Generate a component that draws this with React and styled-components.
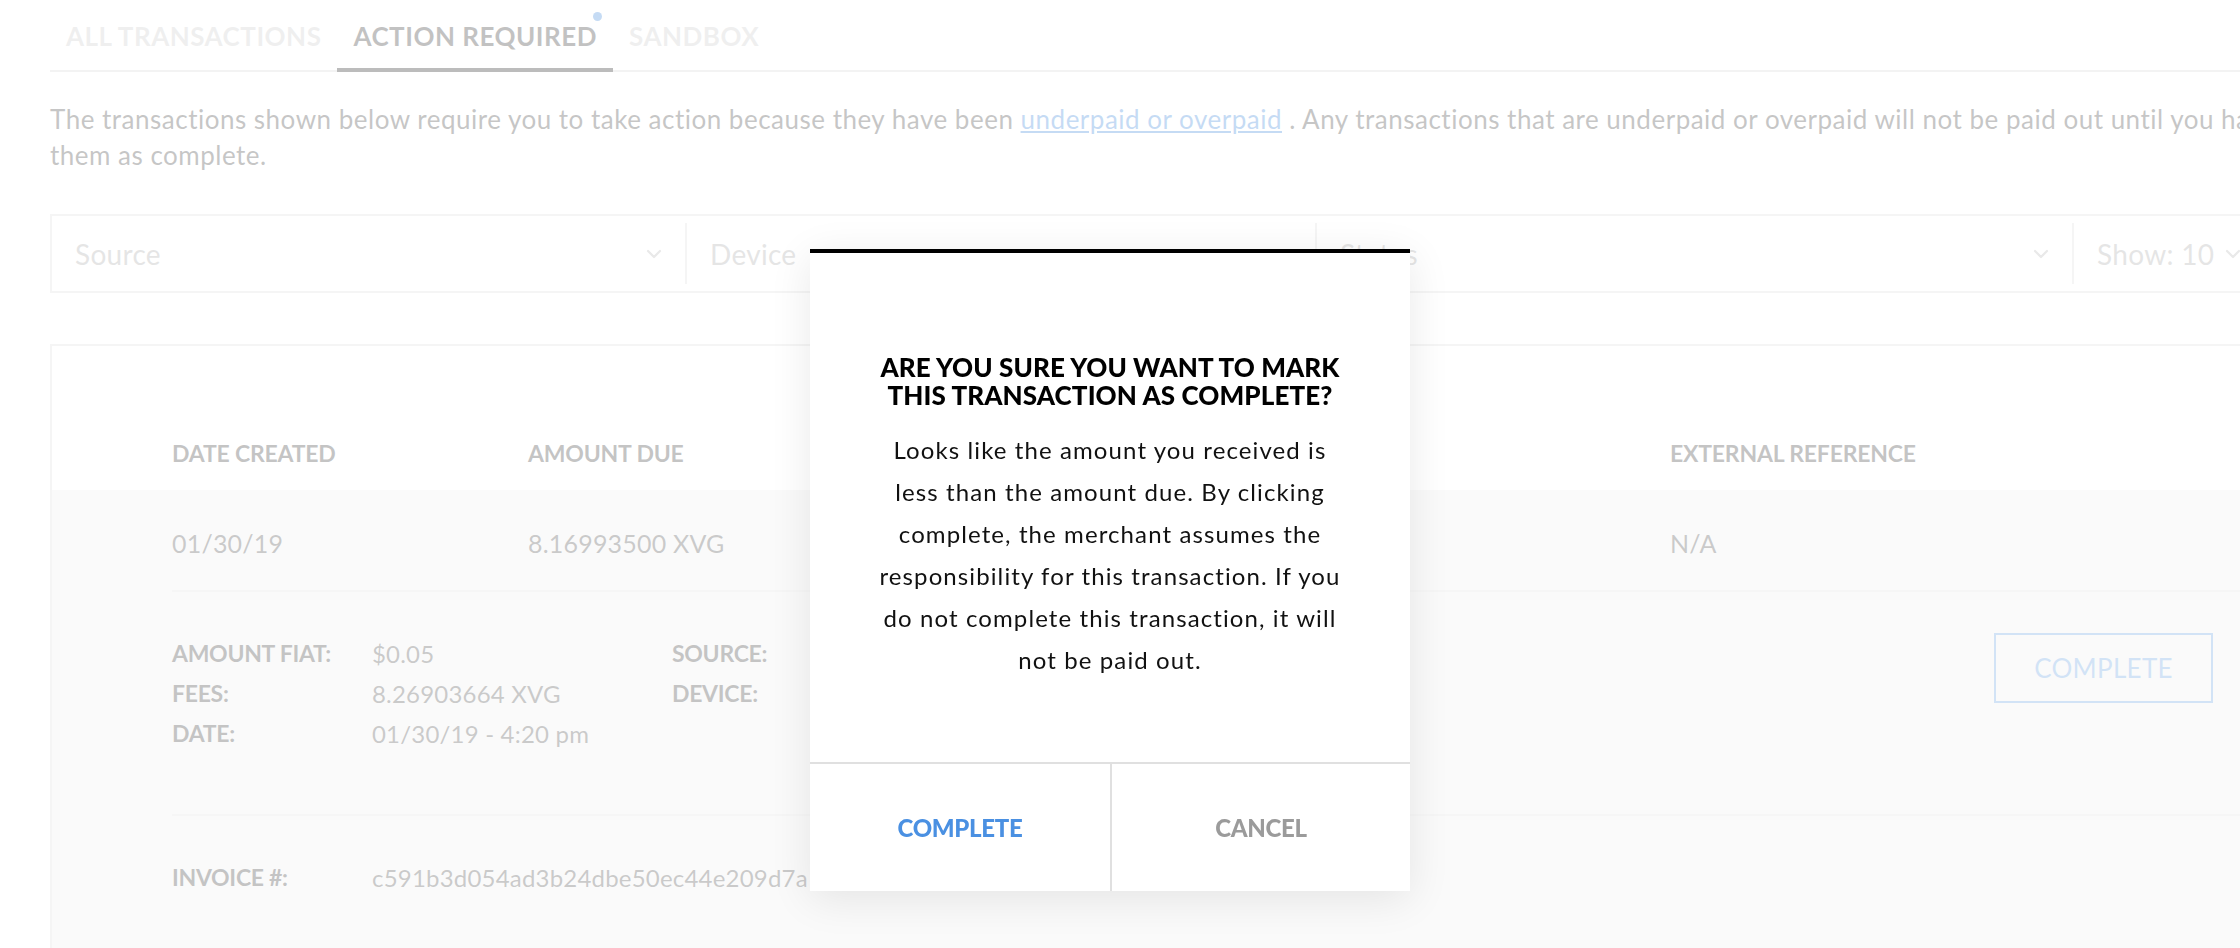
import React from "react";
import styled, { createGlobalStyle } from "styled-components";
import { ChevronDown } from "lucide-react";

const GlobalStyle = createGlobalStyle`
  html, body {
    margin: 0;
    padding: 0;
    background: #ffffff;
    overflow: hidden;
  }
  body {
    font-family: Lato, "Open Sans", "Liberation Sans", sans-serif;
    color: #414141;
  }
  * { box-sizing: border-box; }
`;

const Page = styled.div`
  width: 2400px;
  height: 948px;
  padding-left: 50px;
  position: relative;
`;

const TabBar = styled.div`
  display: flex;
  width: 2216px;
  height: 72px;
  box-shadow: inset 0 -2px 0 #d8d8d8;
`;

const Tab = styled.div`
  position: relative;
  height: 72px;
  padding: 21px 16px 0;
  font-size: 26px;
  line-height: 30px;
  font-weight: 700;
  letter-spacing: 0.5px;
  color: ${(p) => (p.active ? "#343434" : "#cacaca")};
  border-bottom: 4px solid ${(p) => (p.active ? "#202020" : "transparent")};
`;

const Dot = styled.span`
  position: absolute;
  top: 12px;
  right: 11px;
  width: 9px;
  height: 9px;
  border-radius: 50%;
  background: #3e87da;
`;

const Intro = styled.p`
  width: 2325px;
  margin: 29px 0 0;
  font-size: 26px;
  line-height: 36px;
  letter-spacing: 0.5px;
  color: #414141;
`;

const Link = styled.a`
  color: #3e87da;
  text-decoration: underline;
`;

const FilterBar = styled.div`
  display: grid;
  grid-template-columns: 633px 630px 757px 1fr;
  width: 2216px;
  height: 79px;
  margin-top: 41px;
  border: 2px solid #dcdcdc;
`;

const Filter = styled.div`
  display: flex;
  align-items: center;
  justify-content: space-between;
  margin: 7px 0;
  padding: 0 19px 0 23px;
  border-left: ${(p) => (p.first ? "none" : "2px solid #dcdcdc")};
  font-size: 28px;
  letter-spacing: 0.3px;
  color: #a8a8a8;
  svg { color: #b4b4b4; }
`;

const Card = styled.div`
  width: 2216px;
  margin-top: 51px;
  border: 2px solid #dcdcdc;
  border-bottom: none;
  height: 620px;
  background: #eeeeee;
`;

const Columns = styled.div`
  display: grid;
  grid-template-columns: 356px 1142px 1fr;
  padding-left: 120px;
  align-items: center;
`;

const HeaderRow = styled(Columns)`
  height: 144px;
  align-items: end;
  padding-bottom: 23px;
  background: #ffffff;
  font-size: 23px;
  font-weight: 700;
  color: #3a3a3a;
  letter-spacing: -0.2px;
`;

const DataRow = styled(Columns)`
  height: 102px;
  padding-top: 3px;
  font-size: 25px;
  letter-spacing: 0.2px;
  color: #4e4e4e;
  position: relative;
  &::after {
    content: "";
    position: absolute;
    left: 120px;
    right: 0;
    bottom: 0;
    height: 2px;
    background: #e2e2e2;
  }
`;

const Details = styled.div`
  display: flex;
  align-items: flex-start;
  height: 224px;
  padding: 41px 51px 0 120px;
  position: relative;
  &::after {
    content: "";
    position: absolute;
    left: 120px;
    right: 0;
    bottom: 0;
    height: 2px;
    background: #e2e2e2;
  }
`;

const InfoGrid = styled.div`
  display: grid;
  grid-template-columns: 200px 300px;
  grid-auto-rows: 40px;
  align-items: center;
  width: 500px;
`;

const Label = styled.span`
  font-size: 23px;
  font-weight: 700;
  color: #3a3a3a;
  letter-spacing: -0.3px;
`;

const Value = styled.span`
  font-size: 24px;
  letter-spacing: 0.2px;
  color: #4e4e4e;
  white-space: nowrap;
`;

const OutlineButton = styled.button`
  margin-left: auto;
  width: 219px;
  height: 70px;
  background: transparent;
  border: 2px solid #69a2e1;
  color: #69a2e1;
  font-family: inherit;
  font-size: 26px;
  letter-spacing: 0.3px;
`;

const InvoiceRow = styled.div`
  display: grid;
  grid-template-columns: 200px 1fr;
  align-items: center;
  height: 122px;
  padding-left: 120px;
`;

const Overlay = styled.div`
  position: fixed;
  inset: 0;
  background: rgba(255, 255, 255, 0.7);
`;

const Modal = styled.div`
  position: absolute;
  left: 810px;
  top: 249px;
  width: 600px;
  background: #ffffff;
  border-top: 4px solid #000000;
  box-shadow: 0 8px 40px rgba(0, 0, 0, 0.09);
  display: flex;
  flex-direction: column;
`;

const ModalBody = styled.div`
  padding: 100px 62px 81px;
  text-align: center;
`;

const Title = styled.h2`
  margin: 0;
  font-size: 26px;
  line-height: 28px;
  font-weight: 900;
  color: #000000;
  letter-spacing: 0.1px;
`;

const Message = styled.p`
  margin: 20px 0 0;
  font-size: 24px;
  line-height: 42px;
  letter-spacing: 1.1px;
  color: #111111;
`;

const Actions = styled.div`
  display: grid;
  grid-template-columns: 1fr 1fr;
  height: 129px;
  border-top: 2px solid #e0e0e0;
`;

const ActionButton = styled.button`
  border: none;
  border-left: ${(p) => (p.divider ? "2px solid #e0e0e0" : "none")};
  background: #ffffff;
  font-family: inherit;
  font-size: 24px;
  font-weight: 900;
  letter-spacing: -0.3px;
  color: ${(p) => (p.primary ? "#4a90e2" : "#9b9b9b")};
`;

export default function App() {
  return (
    <>
      <GlobalStyle />
      <Page>
        <TabBar>
          <Tab>ALL TRANSACTIONS</Tab>
          <Tab active>
            ACTION REQUIRED
            <Dot />
          </Tab>
          <Tab>SANDBOX</Tab>
        </TabBar>

        <Intro>
          The transactions shown below require you to take action because they have been{" "}
          <Link>underpaid or overpaid</Link> . Any transactions that are underpaid or overpaid will
          not be paid out until you have marked them as complete.
        </Intro>

        <FilterBar>
          <Filter first>
            Source <ChevronDown size={24} strokeWidth={2.2} />
          </Filter>
          <Filter>
            Device <ChevronDown size={24} strokeWidth={2.2} />
          </Filter>
          <Filter>
            Status <ChevronDown size={24} strokeWidth={2.2} />
          </Filter>
          <Filter>
            Show: 10 <ChevronDown size={24} strokeWidth={2.2} />
          </Filter>
        </FilterBar>

        <Card>
          <HeaderRow>
            <span>DATE CREATED</span>
            <span>AMOUNT DUE</span>
            <span>EXTERNAL REFERENCE</span>
          </HeaderRow>
          <DataRow>
            <span>01/30/19</span>
            <span>8.16993500 XVG</span>
            <span>N/A</span>
          </DataRow>
          <Details>
            <InfoGrid>
              <Label>AMOUNT FIAT:</Label>
              <Value>$0.05</Value>
              <Label>FEES:</Label>
              <Value>8.26903664 XVG</Value>
              <Label>DATE:</Label>
              <Value>01/30/19 - 4:20 pm</Value>
            </InfoGrid>
            <InfoGrid>
              <Label>SOURCE:</Label>
              <Value />
              <Label>DEVICE:</Label>
              <Value />
            </InfoGrid>
            <OutlineButton>COMPLETE</OutlineButton>
          </Details>
          <InvoiceRow>
            <Label>INVOICE #:</Label>
            <Value>c591b3d054ad3b24dbe50ec44e209d7a</Value>
          </InvoiceRow>
        </Card>

        <Overlay>
          <Modal>
            <ModalBody>
              <Title>
                ARE YOU SURE YOU WANT TO MARK
                <br />
                THIS TRANSACTION AS COMPLETE?
              </Title>
              <Message>
                Looks like the amount you received is less than the amount due. By clicking
                complete, the merchant assumes the responsibility for this transaction. If you do
                not complete this transaction, it will not be paid out.
              </Message>
            </ModalBody>
            <Actions>
              <ActionButton primary>COMPLETE</ActionButton>
              <ActionButton divider>CANCEL</ActionButton>
            </Actions>
          </Modal>
        </Overlay>
      </Page>
    </>
  );
}
